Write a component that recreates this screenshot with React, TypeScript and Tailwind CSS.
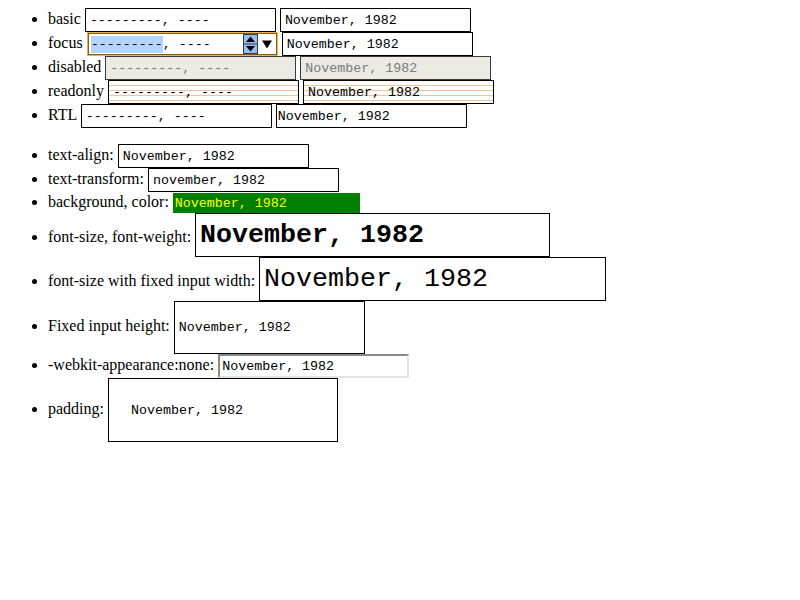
import type { ReactNode } from 'react';

const MONO = "font-['Liberation_Mono','DejaVu_Sans_Mono',monospace]";
const PLACEHOLDER = '---------, ----';
const VALUE = 'November, 1982';

type FieldProps = {
  children: ReactNode;
  className?: string;
};

// a month field drawn as a box with its text
function Field({ children, className = '' }: FieldProps) {
  return (
    <span
      className={`inline-flex items-center align-baseline whitespace-pre leading-[15px] text-[13.33px] ${MONO} ${className}`}
    >
      {children}
    </span>
  );
}

const box = 'h-[24px] w-[191px] border border-black bg-white pl-[4px] text-black';
const disabledBox = 'h-[24px] w-[191px] border border-[#3a3a3a] bg-[#ebebe4] pl-[4px] text-[#7a7a7a]';
const readonlyBox =
  'h-[24px] w-[191px] border border-black pl-[4px] text-black bg-[repeating-linear-gradient(to_bottom,#ffffff_0px,#ffffff_4px,#f2c3a0_4px,#f2c3a0_5px)]';

function SpinAndArrow() {
  return (
    <span className="ml-auto mr-[5px] flex items-center gap-[4px]">
      {/* spin button */}
      <svg width="15" height="20" viewBox="0 0 15 20" className="block">
        <rect x="0.5" y="0.5" width="14" height="19" fill="#97bdf2" stroke="#2f3b4c" />
        <line x1="1" y1="10" x2="14" y2="10" stroke="#2f3b4c" />
        <polygon points="7.5,2.5 12,8 3,8" fill="#000" />
        <polygon points="3,12 12,12 7.5,17.5" fill="#000" />
      </svg>
      {/* drop-down arrow */}
      <svg width="10" height="9" viewBox="0 0 10 9" className="block">
        <polygon points="0,0.5 10,0.5 5,8.5" fill="#000" />
      </svg>
    </span>
  );
}

export default function App() {
  return (
    <div className="min-h-[600px] w-[800px] bg-white pt-2 font-['Liberation_Serif','Times_New_Roman',serif] text-[16px] leading-[16px] text-black">
      <ul className="list-disc pl-12">
        <li>
          basic{' '}
          <Field className={box}>{PLACEHOLDER}</Field>{' '}
          <Field className={box}>{VALUE}</Field>
        </li>
        <li>
          focus{' '}
          <Field className="h-[24px] w-[191px] border border-[#e2b25c] bg-white pl-[3px] text-black shadow-[inset_0_0_0_1px_#8c5e08]">
            <span className="bg-[#b4d5fe] py-[1px]">---------</span>
            <span>, ----</span>
            <SpinAndArrow />
          </Field>{' '}
          <Field className={box}>{VALUE}</Field>
        </li>
        <li>
          disabled{' '}
          <Field className={disabledBox}>{PLACEHOLDER}</Field>{' '}
          <Field className={disabledBox}>{VALUE}</Field>
        </li>
        <li>
          readonly{' '}
          <Field className={readonlyBox}>{PLACEHOLDER}</Field>{' '}
          <Field className={readonlyBox}>{VALUE}</Field>
        </li>
        <li>
          RTL{' '}
          <Field className={box}>{PLACEHOLDER}</Field>{' '}
          <Field className="h-[24px] w-[191px] border border-black bg-white pl-[1px] text-black">{VALUE}</Field>
        </li>
      </ul>

      <ul className="mt-4 list-disc pl-12">
        <li>
          text-align:{' '}
          <Field className={box}>{VALUE}</Field>
        </li>
        <li>
          text-transform:{' '}
          <Field className={box}>november, 1982</Field>
        </li>
        <li>
          background, color:{' '}
          <Field className="mt-[1px] h-[20px] w-[187px] bg-[#008000] pl-[2px] text-[#ffff00]">{VALUE}</Field>
        </li>
        <li>
          font-size, font-weight:{' '}
          <Field className="h-[44px] w-[355px] border border-black bg-white pl-[4px] text-[26.67px] leading-[30px] font-bold text-black">
            {VALUE}
          </Field>
        </li>
        <li>
          font-size with fixed input width:{' '}
          <Field className="h-[44px] w-[347px] border border-black bg-white pl-[4px] text-[26.67px] leading-[30px] text-black">
            {VALUE}
          </Field>
        </li>
        <li>
          Fixed input height:{' '}
          <Field className="h-[53px] w-[191px] border border-black bg-white pl-[4px] text-black">{VALUE}</Field>
        </li>
        <li>
          -webkit-appearance:none:{' '}
          <Field className="h-[24px] w-[191px] border-2 border-t-[#8a8a8a] border-l-[#8a8a8a] border-r-[#e3e3e3] border-b-[#e3e3e3] bg-white pl-[2px] text-black">
            {VALUE}
          </Field>
        </li>
        <li>
          padding:{' '}
          <Field className="h-[64px] w-[230px] border border-black bg-white pl-[22px] text-black">{VALUE}</Field>
        </li>
      </ul>
    </div>
  );
}
